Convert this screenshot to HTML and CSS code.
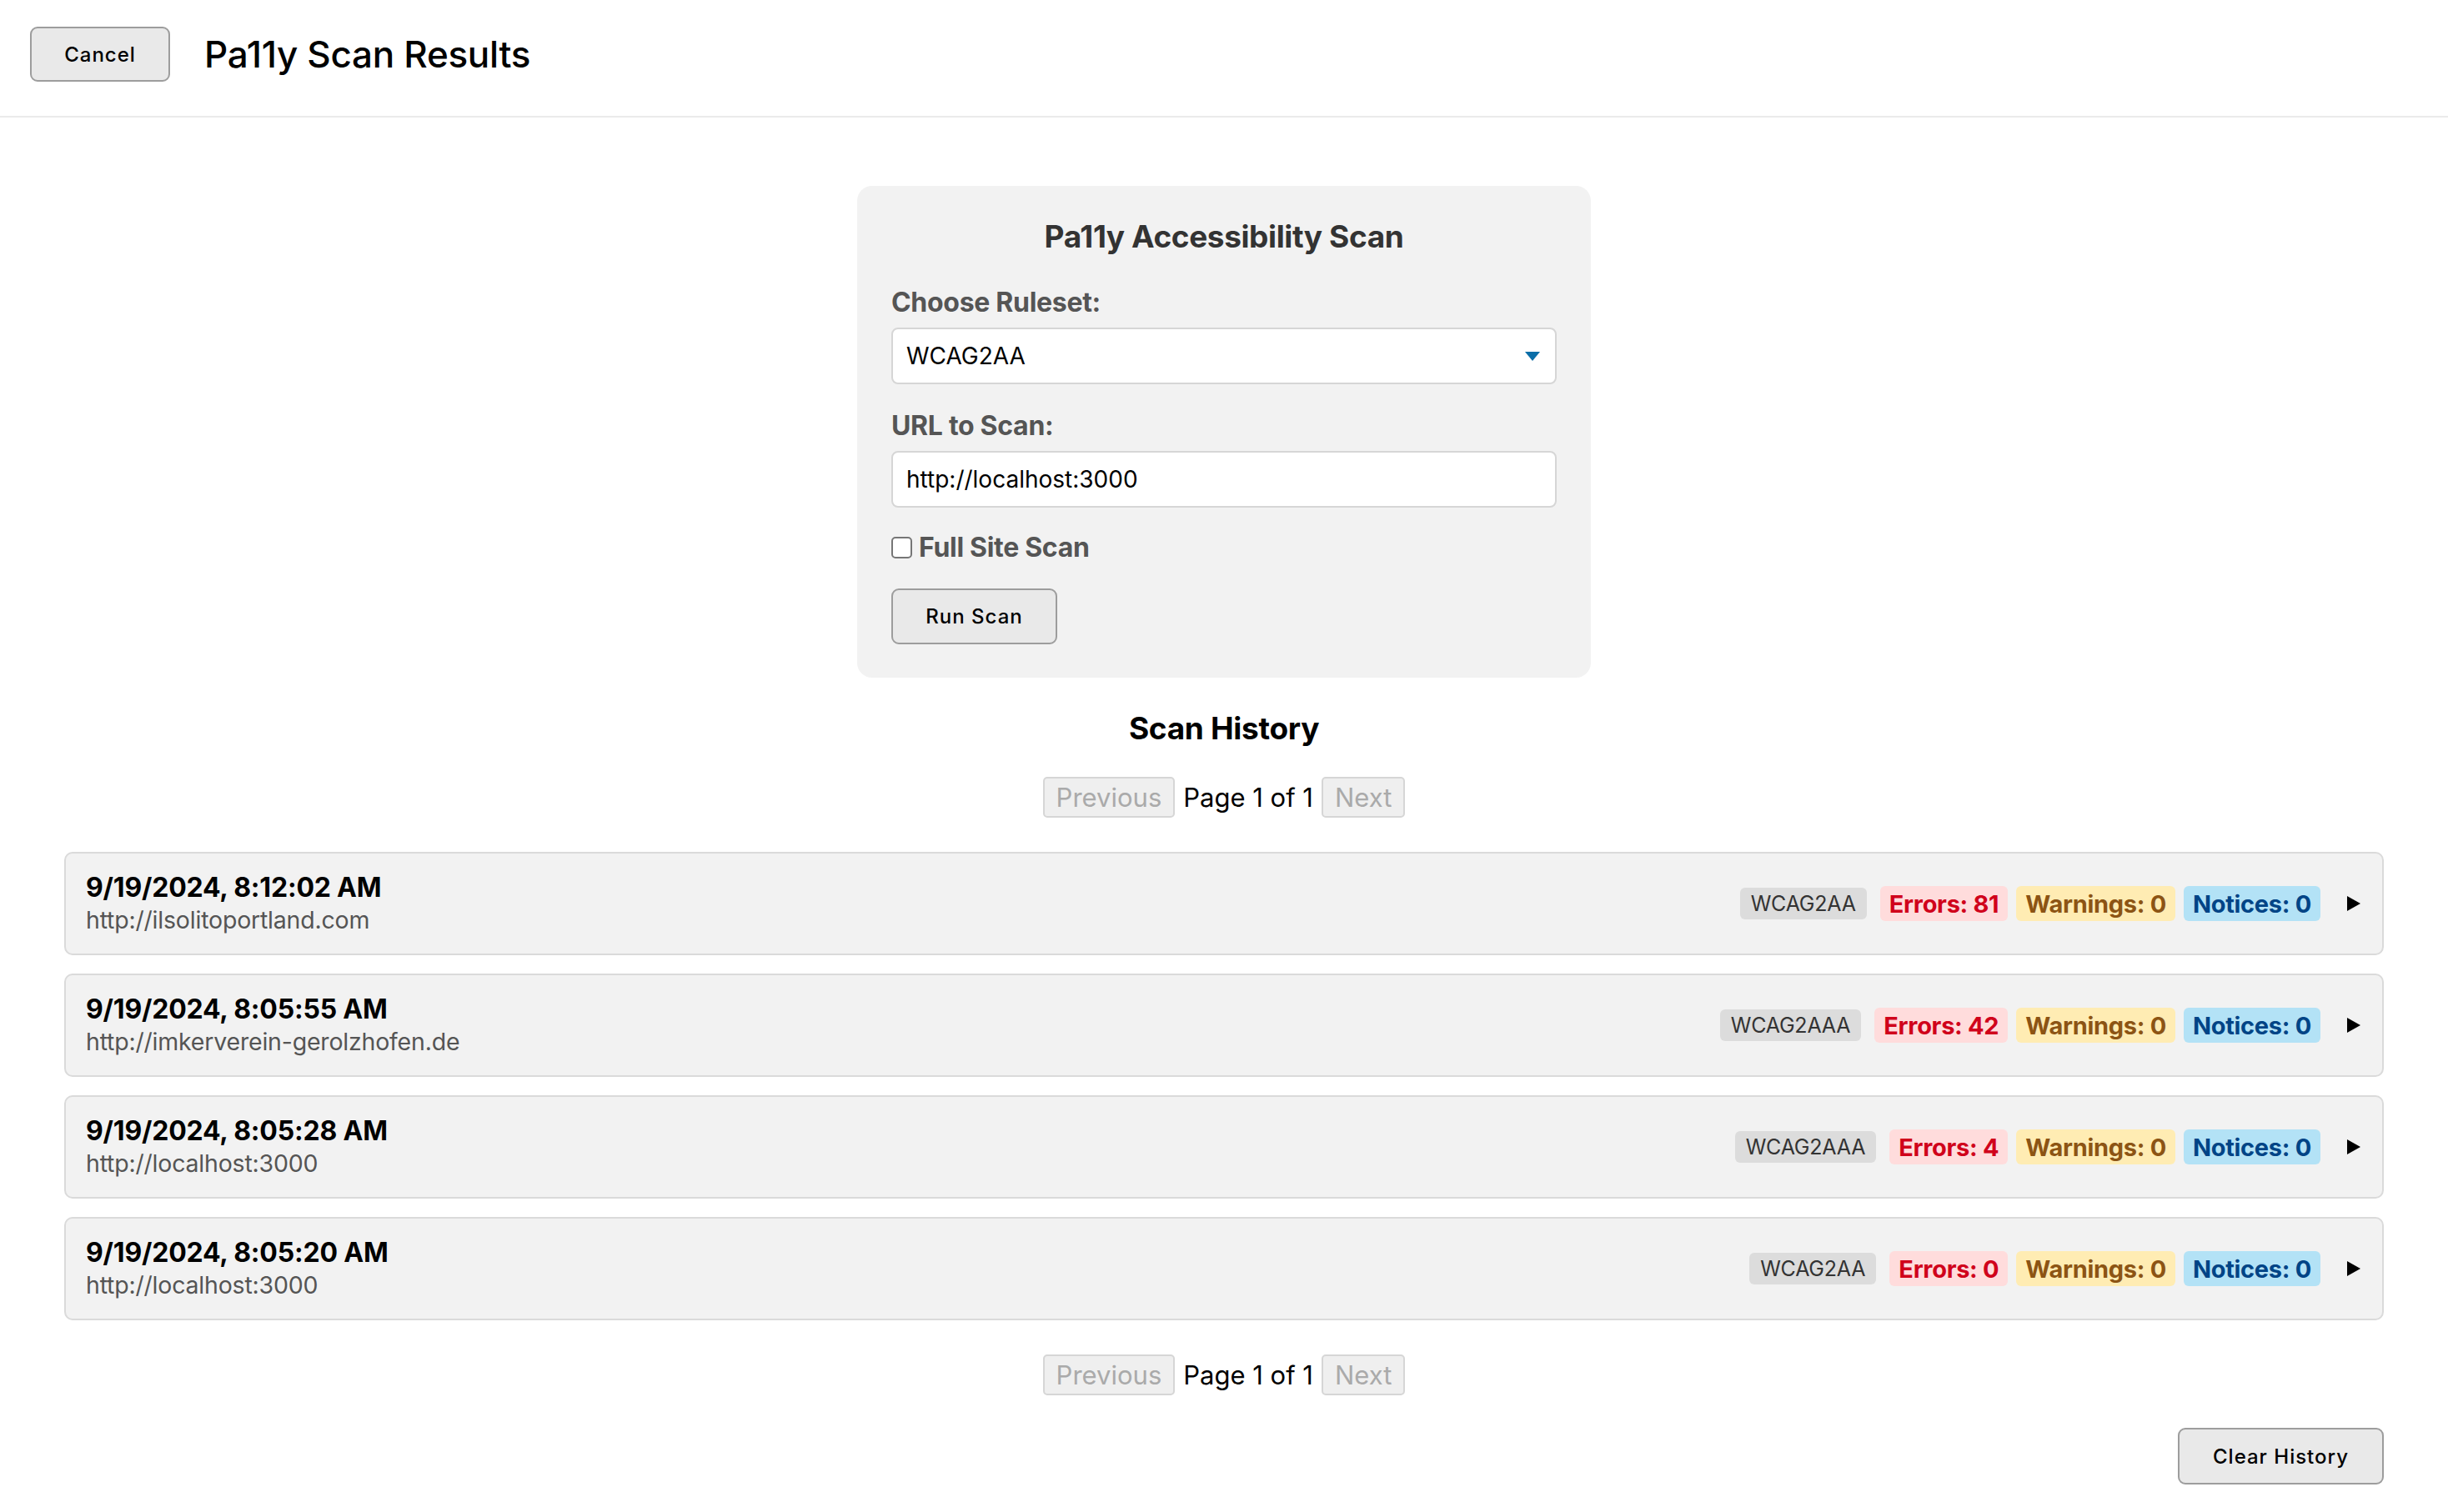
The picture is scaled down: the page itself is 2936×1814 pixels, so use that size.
FILE: index.html
```html
<!DOCTYPE html>
<html lang="en">
<head>
<meta charset="utf-8">
<title>Pa11y Scan Results</title>
<link rel="stylesheet" href="styles.css">
</head>
<body>
<header class="topbar">
  <button class="btn btn-cancel">Cancel</button>
  <h1 class="page-title">Pa11y Scan Results</h1>
</header>
<main class="content">
  <section class="scan-card">
    <h2 class="card-title">Pa11y Accessibility Scan</h2>
    <label class="field-label" for="ruleset">Choose Ruleset:</label>
    <div class="select-wrap">
      <select id="ruleset" class="field-input select">
        <option>WCAG2AA</option>
        <option>WCAG2AAA</option>
      </select>
      <svg class="select-arrow" width="18" height="12" viewBox="0 0 18 12"><polygon points="0,0 18,0 9,11" fill="#0b6ea8"/></svg>
    </div>
    <label class="field-label" for="url">URL to Scan:</label>
    <input id="url" class="field-input" type="text" value="http://localhost:3000">
    <label class="check-row"><span class="checkbox"></span>Full Site Scan</label>
    <div><button class="btn btn-run">Run Scan</button></div>
  </section>

  <h2 class="history-title">Scan History</h2>
  <div class="pager">
    <button class="pg-btn" disabled>Previous</button>
    <span class="pg-text">Page 1 of 1</span>
    <button class="pg-btn" disabled>Next</button>
  </div>

  <ul class="history">
    <li class="row">
      <div class="row-info">
        <div class="row-date">9/19/2024, 8:12:02 AM</div>
        <div class="row-url">http://ilsolitoportland.com</div>
      </div>
      <div class="row-badges">
        <span class="badge badge-std">WCAG2AA</span>
        <span class="badge badge-err">Errors: 81</span>
        <span class="badge badge-warn">Warnings: 0</span>
        <span class="badge badge-note">Notices: 0</span>
        <svg class="caret" width="16" height="18" viewBox="0 0 16 18"><polygon points="0,0 16,9 0,18" fill="#000"/></svg>
      </div>
    </li>
    <li class="row">
      <div class="row-info">
        <div class="row-date">9/19/2024, 8:05:55 AM</div>
        <div class="row-url">http://imkerverein-gerolzhofen.de</div>
      </div>
      <div class="row-badges">
        <span class="badge badge-std">WCAG2AAA</span>
        <span class="badge badge-err">Errors: 42</span>
        <span class="badge badge-warn">Warnings: 0</span>
        <span class="badge badge-note">Notices: 0</span>
        <svg class="caret" width="16" height="18" viewBox="0 0 16 18"><polygon points="0,0 16,9 0,18" fill="#000"/></svg>
      </div>
    </li>
    <li class="row">
      <div class="row-info">
        <div class="row-date">9/19/2024, 8:05:28 AM</div>
        <div class="row-url">http://localhost:3000</div>
      </div>
      <div class="row-badges">
        <span class="badge badge-std">WCAG2AAA</span>
        <span class="badge badge-err">Errors: 4</span>
        <span class="badge badge-warn">Warnings: 0</span>
        <span class="badge badge-note">Notices: 0</span>
        <svg class="caret" width="16" height="18" viewBox="0 0 16 18"><polygon points="0,0 16,9 0,18" fill="#000"/></svg>
      </div>
    </li>
    <li class="row">
      <div class="row-info">
        <div class="row-date">9/19/2024, 8:05:20 AM</div>
        <div class="row-url">http://localhost:3000</div>
      </div>
      <div class="row-badges">
        <span class="badge badge-std">WCAG2AA</span>
        <span class="badge badge-err">Errors: 0</span>
        <span class="badge badge-warn">Warnings: 0</span>
        <span class="badge badge-note">Notices: 0</span>
        <svg class="caret" width="16" height="18" viewBox="0 0 16 18"><polygon points="0,0 16,9 0,18" fill="#000"/></svg>
      </div>
    </li>
  </ul>

  <div class="pager pager-bottom">
    <button class="pg-btn" disabled>Previous</button>
    <span class="pg-text">Page 1 of 1</span>
    <button class="pg-btn" disabled>Next</button>
  </div>

  <div class="footer-actions">
    <button class="btn btn-clear">Clear History</button>
  </div>
</main>
</body>
</html>
```
FILE: styles.css
```css
* { box-sizing: border-box; }
html, body { margin: 0; padding: 0; background: #fff; }
body {
  font-family: Inter, "Noto Sans", sans-serif;
  color: #000;
}

.topbar {
  height: 141px;
  display: flex;
  align-items: center;
  padding: 0 0 9px 36px;
  gap: 41px;
  border-bottom: 2px solid #ebebeb;
}
.page-title {
  margin: 0;
  font-size: 44px;
  line-height: 52px;
  font-weight: 500;
  letter-spacing: -0.3px;
}

.btn {
  font-family: Inter, sans-serif;
  background: #e9e9e9;
  border: 2px solid #9d9d9d;
  border-radius: 9px;
  color: #000;
  font-size: 24px;
  font-weight: 500;
  letter-spacing: 1px;
  padding: 0;
}
.btn-cancel { width: 168px; height: 66px; }
.btn-run { width: 199px; height: 67px; }
.btn-clear { width: 247px; height: 68px; }

.content { padding: 0 77px 33px; }

.scan-card {
  width: 880px;
  margin: 82px auto 0;
  background: #f2f2f2;
  border-radius: 18px;
  padding: 40px 41px;
  display: flex;
  flex-direction: column;
}
.card-title {
  margin: 0 0 40px;
  text-align: center;
  font-size: 37px;
  line-height: 42px;
  font-weight: 700;
  color: #333;
  letter-spacing: -0.4px;
}
.field-label {
  display: block;
  font-size: 32px;
  line-height: 36px;
  font-weight: 700;
  color: #555;
  margin-bottom: 12px;
  letter-spacing: -0.3px;
}
.field-input {
  width: 100%;
  height: 68px;
  border: 2px solid #d6d6d6;
  border-radius: 8px;
  background: #fff;
  font-family: Inter, sans-serif;
  font-size: 28px;
  color: #000;
  padding: 0 16px;
  margin-bottom: 32px;
  outline: none;
}
.select-wrap { position: relative; }
.select { appearance: none; -webkit-appearance: none; }
.select-arrow { position: absolute; right: 20px; top: 29px; }

.check-row {
  display: flex;
  align-items: center;
  gap: 8px;
  font-size: 32px;
  line-height: 36px;
  font-weight: 700;
  color: #555;
  margin-top: -2px;
  margin-bottom: 31px;
  letter-spacing: -0.3px;
}
.checkbox {
  width: 25px;
  height: 26px;
  border: 2px solid #767676;
  border-radius: 5px;
  background: #fff;
}

.history-title {
  margin: 39px 0 36px;
  text-align: center;
  font-size: 37px;
  line-height: 44px;
  font-weight: 700;
  letter-spacing: -0.3px;
}

.pager {
  display: flex;
  justify-content: center;
  align-items: center;
  gap: 10px;
  height: 49px;
}
.pg-btn {
  height: 49px;
  font-family: Inter, sans-serif;
  font-size: 31px;
  color: #aaa;
  background: #efefef;
  border: 2px solid #d6d6d6;
  border-radius: 5px;
  padding: 0 14px;
}
.pg-text { font-size: 31px; color: #000; }

.history {
  list-style: none;
  margin: 41px 0 0;
  padding: 0;
  display: flex;
  flex-direction: column;
  gap: 22px;
}
.row {
  height: 124px;
  background: #f2f2f2;
  border: 2px solid #dadada;
  border-radius: 10px;
  padding: 0 26px 0 24px;
  display: flex;
  align-items: center;
  justify-content: space-between;
}
.row-date {
  font-size: 32px;
  line-height: 40px;
  font-weight: 700;
  letter-spacing: -0.2px;
}
.row-url {
  font-size: 28.5px;
  line-height: 38px;
  color: #555;
  letter-spacing: -0.2px;
}
.row-badges {
  display: flex;
  align-items: center;
  gap: 10px;
}
.badge {
  height: 42px;
  display: inline-flex;
  align-items: center;
  padding: 0 11px;
  border-radius: 6px;
  font-size: 29px;
  font-weight: 700;
  letter-spacing: -0.3px;
}
.badge-std {
  height: 38px;
  background: #dcdcdc;
  color: #333;
  font-weight: 400;
  font-size: 25px;
  padding: 0 13px;
  margin-right: 6px;
  letter-spacing: -0.2px;
}
.badge-err { background: #ffdcdc; color: #d0021b; }
.badge-warn { background: #ffecb3; color: #8c5414; }
.badge-note { background: #b3e2f6; color: #014486; }
.caret { margin-left: 22px; }

.pager-bottom { margin-top: 41px; }
.footer-actions {
  display: flex;
  justify-content: flex-end;
  margin-top: 39px;
}
```
